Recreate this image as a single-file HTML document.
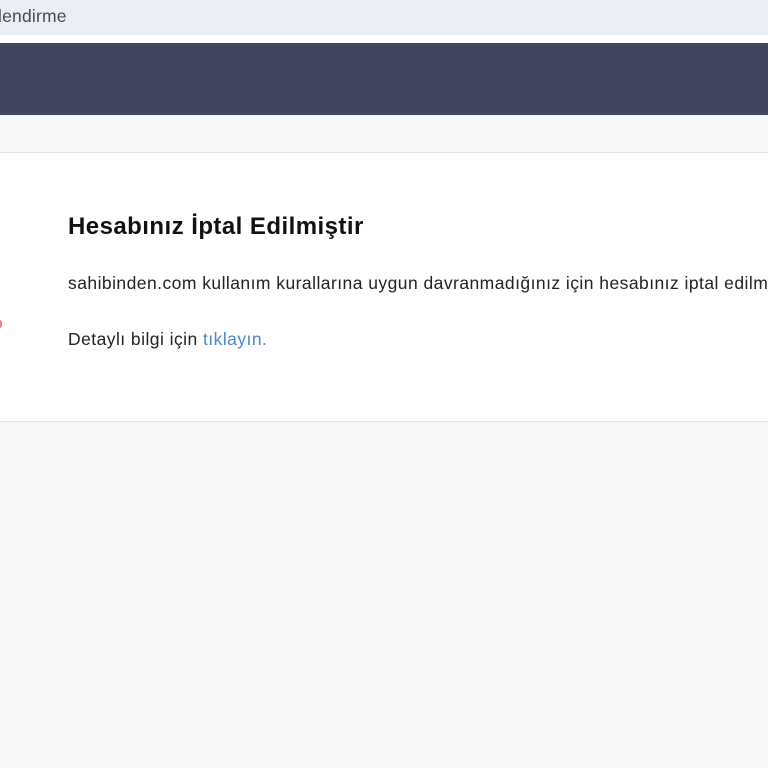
<!DOCTYPE html>
<html><head><meta charset="utf-8"><style>
html,body{margin:0;padding:0;width:768px;height:768px;overflow:hidden;background:#f7f7f7;font-family:"Liberation Sans",sans-serif}
.top{position:absolute;left:0;top:0;width:768px;height:35px;background:#eceef6;color:#4a4a4a;font-size:17.5px;line-height:33px;letter-spacing:0.2px}
.top span{position:absolute;left:-2px}
.white{position:absolute;top:35px;height:8px;width:768px;background:#fff}
.dark{position:absolute;top:43px;height:72px;width:768px;background:#3f465e}
.card{position:absolute;top:152px;height:268px;width:768px;background:#fff;border-top:1px solid #e3e3e3;border-bottom:1px solid #e3e3e3}
h1{position:absolute;left:68px;top:60px;margin:0;font-size:24px;font-weight:bold;color:#111;white-space:nowrap;letter-spacing:0.45px}
p{position:absolute;left:68px;margin:0;font-size:17.5px;color:#222;white-space:nowrap;letter-spacing:0.45px}
a{color:#4a86c8;text-decoration:none}
.dot{position:absolute;left:-3px;top:167px;width:5px;height:8px;border-radius:3px;background:#f08080}
</style></head><body>
<div class="top"><span>lendirme</span></div>
<div class="white"></div>
<div class="dark"></div>
<div class="card">
<h1>Hesabınız İptal Edilmiştir</h1>
<p style="top:120px">sahibinden.com kullanım kurallarına uygun davranmadığınız için hesabınız iptal edilmiştir.</p>
<p style="top:176px">Detaylı bilgi için <a>tıklayın.</a></p>
<div class="dot"></div>
</div>
</body></html>
